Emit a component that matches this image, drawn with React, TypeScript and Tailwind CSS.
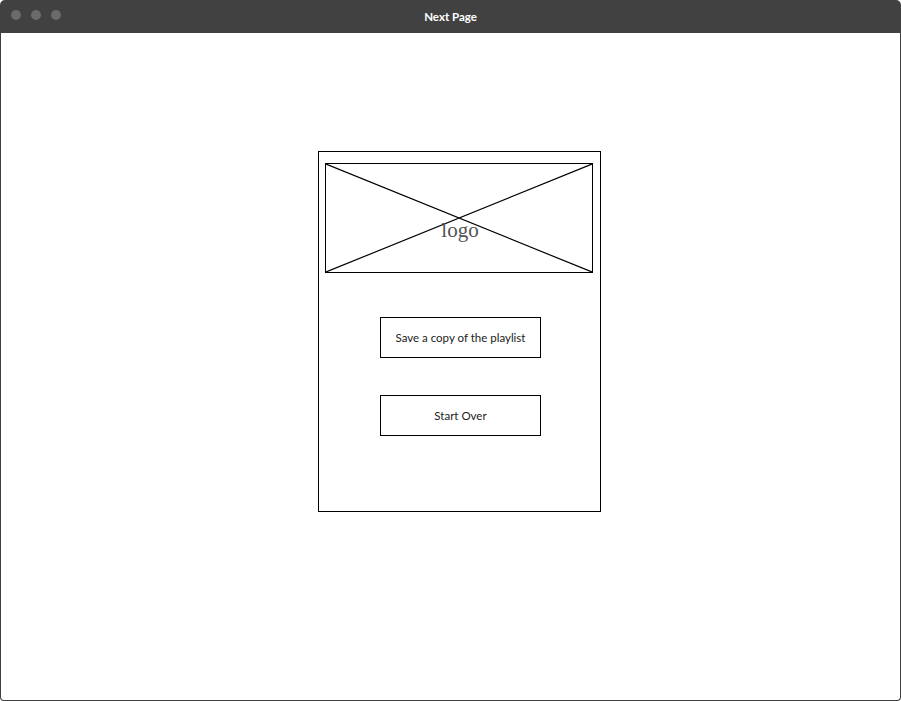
import React from 'react'

// Wireframe of the "Next Page" screen: window chrome + a card with logo
// placeholder and two action buttons.
export default function App() {
  return (
    <div className="flex h-[701px] w-[901px] flex-col bg-white font-['Lato',sans-serif]">
      {/* Window title bar */}
      <div className="relative flex h-[33px] items-center justify-center rounded-t-[5px] bg-[#414141]">
        <div className="absolute left-[11px] top-[10px] flex gap-[10px]">
          <span className="h-[10px] w-[10px] rounded-full bg-[#6b6b6b]" />
          <span className="h-[10px] w-[10px] rounded-full bg-[#6b6b6b]" />
          <span className="h-[10px] w-[10px] rounded-full bg-[#6b6b6b]" />
        </div>
        <span className="text-[11.5px] font-bold text-white">Next Page</span>
      </div>

      {/* Window body */}
      <div className="flex-1 rounded-b-[4px] border-x border-b border-[#3f3f3f] pl-[317px] pt-[118px]">
        <div className="flex h-[361px] w-[283px] flex-col border border-black pl-[6px] pt-[11px]">
          <LogoPlaceholder />

          <button
            type="button"
            className="ml-[55px] mt-[44px] h-[41px] w-[161px] border border-black bg-white text-[11.5px] text-[#222]"
          >
            Save a copy of the playlist
          </button>
          <button
            type="button"
            className="ml-[55px] mt-[37px] h-[41px] w-[161px] border border-black bg-white text-[11.5px] text-[#222]"
          >
            Start Over
          </button>
        </div>
      </div>
    </div>
  )
}

function LogoPlaceholder() {
  return (
    <div className="relative h-[110px] w-[268px] border border-black">
      <svg className="absolute inset-0 h-full w-full" viewBox="0 0 266 108" preserveAspectRatio="none" aria-hidden="true">
        <path d="M0 0L266 108M266 0L0 108" stroke="#000" strokeWidth="1.2" fill="none" />
      </svg>
      <span className="absolute left-0 right-0 top-[54px] pl-[2px] text-center font-['Liberation_Serif',serif] text-[21px] leading-[24px] text-[#555]">
        logo
      </span>
    </div>
  )
}
